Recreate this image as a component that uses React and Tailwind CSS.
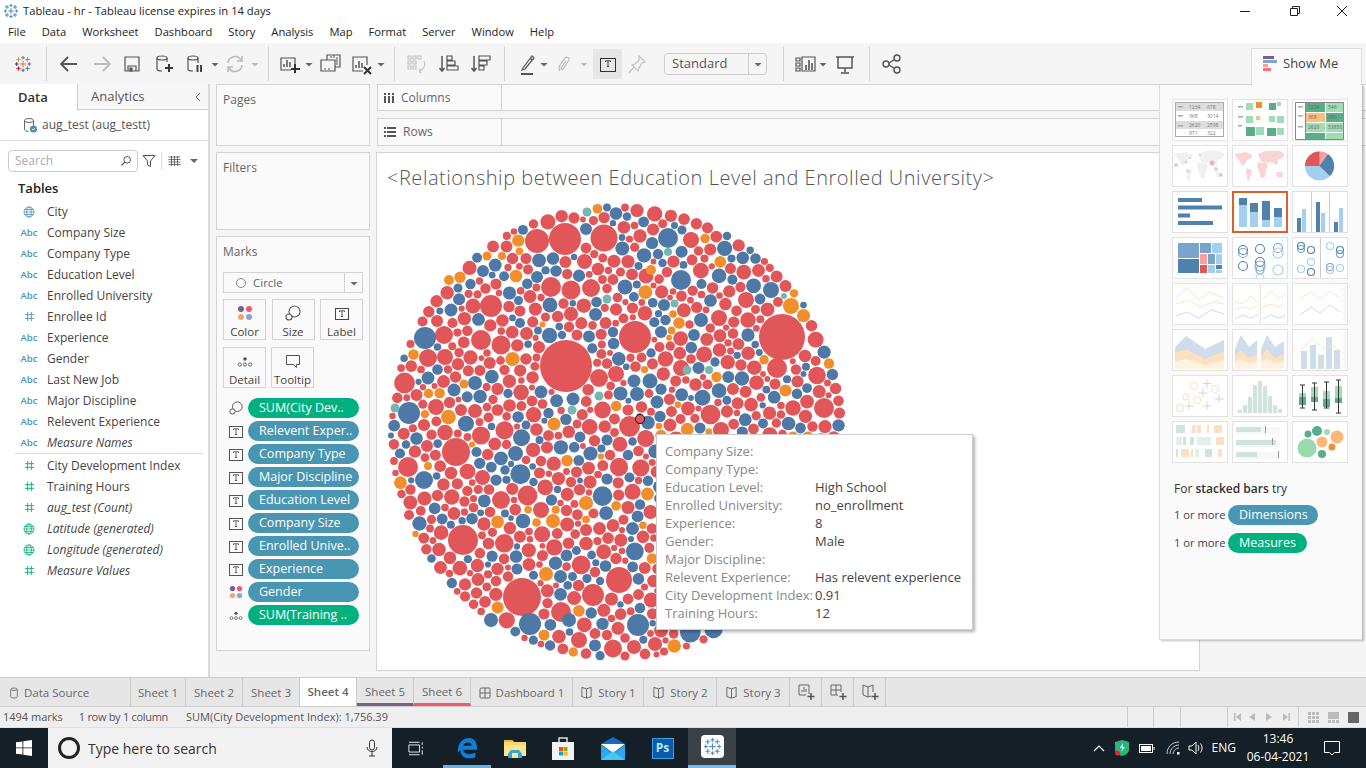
import React from 'react';

const RED = '#e15759';
const BLUE = '#4e79a7';
const ORANGE = '#f28e2b';
const TEAL = '#76b7b2';

// big marks read off the picture, page coordinates
const fixedMarks = [
  [565, 366, 26, RED], [634, 337, 16, RED], [564, 239, 16, RED], [603, 238, 13.5, RED], [536, 241, 12, RED],
  [550, 287, 10, RED], [570, 290, 9.5, RED], [590, 288, 9, RED], [490, 306, 11, RED], [472, 306, 7.5, RED],
  [480, 340, 10, RED], [500, 345, 9.5, RED], [443, 335, 9, RED], [427, 358, 9, RED], [444, 357, 8, RED],
  [435, 407, 8, RED], [460, 410, 6, RED], [474, 411, 7, RED], [598, 378, 9, RED], [615, 374, 8, RED],
  [645, 276, 7.5, RED], [781, 337, 23, RED], [521, 597, 19, RED], [462, 540, 15, RED], [455, 452, 14, RED],
  [618, 580, 13, RED], [592, 595, 11, RED], [407, 467, 10, RED], [776, 368, 10, RED], [823, 408, 10, RED],
  [799, 454, 10, RED], [560, 612, 10, RED], [578, 640, 8, RED], [500, 500, 9, RED], [540, 510, 8, RED],
  [680, 368, 8, RED], [718, 318, 8, RED], [690, 240, 8, RED], [745, 300, 8, RED], [720, 430, 8, RED],
  [424, 338, 11, BLUE], [408, 413, 11, BLUE], [667, 238, 10, BLUE], [474, 383, 7, BLUE], [453, 390, 6.5, BLUE],
  [427, 378, 6.5, BLUE], [450, 310, 6.5, BLUE], [624, 287, 7.5, BLUE], [649, 381, 7.5, BLUE], [633, 381, 6.5, BLUE],
  [636, 394, 7, BLUE], [656, 402, 6.5, BLUE], [572, 399, 6.5, BLUE], [555, 271, 5.8, BLUE], [536, 277, 6, BLUE],
  [482, 271, 6, BLUE], [585, 229, 6, BLUE], [637, 625, 11, BLUE], [529, 624, 11, BLUE], [680, 280, 10, BLUE],
  [423, 480, 9, BLUE], [490, 620, 7, BLUE], [568, 620, 7, BLUE], [770, 290, 8, BLUE], [700, 320, 7, BLUE],
  [515, 276, 6.3, ORANGE], [553, 424, 6.5, ORANGE], [790, 306, 8, ORANGE], [463, 384, 4.5, ORANGE], [448, 280, 5, ORANGE],
  [486, 256, 4.5, ORANGE], [501, 256, 4, ORANGE], [427, 466, 4, ORANGE], [545, 574, 7, ORANGE], [650, 270, 5, ORANGE],
  [586, 212, 4.5, TEAL], [606, 299, 4.5, TEAL], [598, 396, 4.5, TEAL], [571, 410, 4.5, TEAL], [394, 408, 4.5, TEAL],
  [667, 252, 4, TEAL], [686, 370, 4.5, TEAL], [708, 370, 4, TEAL],
];

function packMarks() {
  let seed = 74231;
  const rnd = () => {
    seed = (seed + 0x6d2b79f5) | 0;
    let t = Math.imul(seed ^ (seed >>> 15), 1 | seed);
    t = (t + Math.imul(t ^ (t >>> 7), 61 | t)) ^ t;
    return ((t ^ (t >>> 14)) >>> 0) / 4294967296;
  };
  const cx = 616, cy = 432, R = 229, gap = 0.6, cell = 24;
  const fixed = fixedMarks.map(([x, y, r, c]) => ({ x, y, r, c, fixed: true }));
  const out = [];
  const hash = new Map();
  const key = (a, b) => a * 1000 + b;
  const cellOf = (m) => key(Math.floor(m.x / cell), Math.floor(m.y / cell));
  const add = (m) => {
    const k = cellOf(m);
    if (!hash.has(k)) hash.set(k, []);
    hash.get(k).push(m);
  };
  const remove = (m) => {
    const list = hash.get(cellOf(m));
    list.splice(list.indexOf(m), 1);
  };
  // largest radius that is free at (x,y), self excluded
  const room = (x, y, self) => {
    let best = R - Math.hypot(x - cx, y - cy);
    for (const m of fixed) best = Math.min(best, Math.hypot(x - m.x, y - m.y) - m.r - gap);
    const a = Math.floor(x / cell), b = Math.floor(y / cell);
    for (let i = a - 1; i <= a + 1; i++) for (let j = b - 1; j <= b + 1; j++) {
      const list = hash.get(key(i, j));
      if (!list) continue;
      for (const m of list) {
        if (m !== self) best = Math.min(best, Math.hypot(x - m.x, y - m.y) - m.r - gap);
      }
    }
    return best;
  };
  const points = [];
  for (let x = cx - R; x <= cx + R; x += 1.5) for (let y = cy - R; y <= cy + R; y += 1.5) {
    if ((x - cx) ** 2 + (y - cy) ** 2 < R * R) points.push([x, y]);
  }
  const classes = [[10, 6], [8.5, 16], [7.2, 50], [6.2, 170], [5.3, 330], [4.5, 520], [3.8, 500], [3, 300]];
  for (const [size, count] of classes) {
    for (let i = points.length - 1; i > 0; i--) {
      const j = Math.floor(rnd() * (i + 1));
      [points[i], points[j]] = [points[j], points[i]];
    }
    let placed = 0;
    for (const [x, y] of points) {
      if (placed >= count) break;
      const r = size * (0.94 + rnd() * 0.1);
      if (room(x, y, null) < r) continue;
      const v = rnd();
      const m = { x, y, r, c: v < 0.66 ? RED : v < 0.92 ? BLUE : v < 0.985 ? ORANGE : TEAL };
      out.push(m);
      add(m);
      placed++;
    }
  }
  // nudge and grow each mark into the free space next to it, that closes the gaps
  for (let pass = 0; pass < 4; pass++) {
    for (const m of out) {
      remove(m);
      let bx = m.x, by = m.y, br = room(m.x, m.y, null);
      for (let t = 0; t < 6; t++) {
        const a = rnd() * 6.283, d = 0.5 + rnd() * 2.5;
        const x = m.x + Math.cos(a) * d, y = m.y + Math.sin(a) * d;
        const r = room(x, y, null);
        if (r > br) { bx = x; by = y; br = r; }
      }
      m.x = bx; m.y = by;
      m.r = Math.min(br, Math.max(m.r + 1.2, 6));
      add(m);
    }
  }
  for (const m of out) {
    if (m.c === TEAL && m.r > 5) m.c = RED;
    if (m.c === ORANGE && m.r > 7.5) m.c = RED;
  }
  return fixed.concat(out);
}

const marks = packMarks();

function BubbleChart() {
  return (
    <svg viewBox="376 196 480 474" className="w-[480px] h-[474px] block">
      {marks.map((m, i) => (
        <circle key={i} cx={m.x} cy={m.y} r={m.r} fill={m.c} />
      ))}
      <circle cx="639" cy="419" r="4.6" fill={RED} stroke="#111" strokeWidth="1" />
    </svg>
  );
}

function Ico({ className = 'w-[24px] h-[24px]', size = 24, children, color = '#555', fill = 'none', sw = 1.2 }) {
  return (
    <svg viewBox={`0 0 ${size} ${size}`} className={`${className} shrink-0`} fill={fill} stroke={color} strokeWidth={sw}>
      {children}
    </svg>
  );
}

function Caret({ className, color = '#666' }) {
  return (
    <svg viewBox="0 0 8 24" className={`w-[8px] h-[24px] shrink-0 ${className}`}>
      <path d="M0.5 11h7l-3.5 3.5z" fill={color} />
    </svg>
  );
}

function Sep({ className }) {
  return <div className={`w-px h-[35px] bg-[#d4d4d4] shrink-0 ${className}`} />;
}

function TableauLogo({ className = 'w-[18px] h-[18px]', mono }) {
  const cross = (x, y, s, c) => (
    <path d={`M${x - s} ${y}h${2 * s}M${x} ${y - s}v${2 * s}`} stroke={mono || c} strokeWidth="1.2" />
  );
  return (
    <svg viewBox="0 0 20 20" className={className} fill="none">
      {cross(10, 10, 3.5, mono || '#e8762c')}
      {cross(10, 3, 2, '#5b879b')}
      {cross(10, 17, 2, '#5b6591')}
      {cross(3, 10, 2, '#1f447e')}
      {cross(17, 10, 2, '#5c6692')}
      {cross(5, 5, 2.5, '#eb912b')}
      {cross(15, 5, 2.5, '#7099a6')}
      {cross(5, 15, 2.5, '#c72035')}
      {cross(15, 15, 2.5, '#59879b')}
    </svg>
  );
}

function TextBox({ className = 'w-[24px] h-[24px]', size = 24, x = 5, w = 14, color = '#444' }) {
  return (
    <svg viewBox={`0 0 ${size} ${size}`} className={`${className} shrink-0`} fill="none" stroke={color}>
      <rect x={x + 0.5} y={x + 2.5} width={w - 1} height={w - 3} />
      <path d={`M${x + w / 2 - 2.5} ${x + 6}v-1.2h5v1.2M${x + w / 2} ${x + 4.8}v5.7M${x + w / 2 - 1.2} ${x + 10.5}h2.4`} strokeWidth="0.9" />
    </svg>
  );
}

function Toolbar() {
  return (
    <div className="h-[41px] bg-[#f5f5f5] flex items-center shrink-0">
      <div className="w-[46px] flex justify-center"><TableauLogo /></div>
      <Sep className="ml-0" />
      <Ico className="w-[24px] h-[24px] ml-[10px]" color="#555" sw="1.8"><path d="M20 12H4M11 5l-7 7 7 7" /></Ico>
      <Ico className="w-[24px] h-[24px] ml-[9px]" color="#bbb" sw="1.8"><path d="M4 12h16M13 5l7 7-7 7" /></Ico>
      <Ico className="w-[24px] h-[24px] ml-[6px]"><path d="M5 5h14v14H5zM8 19v-5h8v5" /><path d="M10 16h2v3h-2z" fill="#555" /></Ico>
      <Ico className="w-[24px] h-[24px] ml-[8px]"><ellipse cx="10" cy="6" rx="5" ry="2" /><path d="M5 6v11c0 1 2 2 5 2M15 6v4" /><path d="M17 12v8M13 16h8" stroke="#333" strokeWidth="2" /></Ico>
      <Ico className="w-[24px] h-[24px] ml-[7px]"><ellipse cx="10" cy="6" rx="5" ry="2" /><path d="M5 6v11c0 1 2 2 5 2M15 6v5" /><path d="M14.5 13v7M18 13v7" stroke="#444" strokeWidth="2" /></Ico>
      <Caret className="ml-[4px]" />
      <Ico className="w-[24px] h-[24px] ml-[4px]" color="#bbb" sw="1.6"><path d="M5 11a7 7 0 0 1 13-3M19 13a7 7 0 0 1-13 3" /><path d="M19 4v5h-5M5 20v-5h5" /></Ico>
      <Caret className="ml-[4px]" color="#bbb" />
      <Sep className="ml-[9px]" />
      <Ico className="w-[24px] h-[24px] ml-[8px]"><path d="M14 18H4V6h14v6" /><path d="M7 15v-3M10 15V8M13 15v-5" strokeWidth="1.5" /><path d="M18 12v9M14 17h9" stroke="#333" strokeWidth="2" /></Ico>
      <Caret className="ml-[4px]" />
      <Ico className="w-[24px] h-[24px] ml-[5px]"><path d="M9 8V3h13v12h-5" /><path d="M3 8h14v11H3z" fill="#f5f5f5" /><path d="M13 6V4M16 6V3M19 13V5M6 17h2M10 17h2" strokeWidth="1" /></Ico>
      <Ico className="w-[24px] h-[24px] ml-[7px]"><path d="M14 19H4V5h14v8" /><path d="M7 16v-3M10 16V9M13 16v-5" strokeWidth="1.5" /><path d="M15 15l7 7M22 15l-7 7" stroke="#333" strokeWidth="2" /></Ico>
      <Caret className="ml-[4px]" />
      <Sep className="ml-[9px]" />
      <Ico className="w-[24px] h-[24px] ml-[9px]" color="#c4c4c4"><path d="M4 4h3v3H4zM9 4h3v3H9zM14 4h3v3h-3zM4 9h3v3H4zM9 9h3v3H9zM4 14h3v3H4zM9 14h3v3H9z" /><path d="M20 9a7 7 0 0 1-5 10M15 19l2-2M15 19l2 2" /></Ico>
      <Ico className="w-[24px] h-[24px] ml-[9px]"><path d="M5 4v15M2.5 16l2.5 3 2.5-3" strokeWidth="1.5" /><path d="M10 4h5v4h-5zM10 9h8v4h-8zM10 14h11v4H10z" /></Ico>
      <Ico className="w-[24px] h-[24px] ml-[8px]"><path d="M5 4v15M2.5 16l2.5 3 2.5-3" strokeWidth="1.5" /><path d="M10 4h11v4H10zM10 9h8v4h-8zM10 14h5v4h-5z" /></Ico>
      <Sep className="ml-[11px]" />
      <Ico className="w-[24px] h-[24px] ml-[10px]"><path d="M8 16l-1 2 3-1 9-11-2-2zM15 6l2 2" /><path d="M6 22h12" strokeWidth="2" /></Ico>
      <Caret className="ml-[1px]" />
      <Ico className="w-[24px] h-[24px] ml-[4px]" color="#bbb"><path d="M8 19c-2-2-1-4 0-6l5-7c2-2 5 0 4 2l-6 9c-1 1-2 0-2-1l5-7" /></Ico>
      <Caret className="ml-[4px]" color="#bbb" />
      <div className="w-[29px] h-[30px] ml-[5px] bg-[#e6e6e6] flex items-center justify-center"><TextBox color="#333" x={4} w={16} /></div>
      <Ico className="w-[24px] h-[24px] ml-[3px]" color="#c0c0c0"><path d="M14 4l6 6-3 1-3 5-1 3-6-6 3-1 4-4zM9 15l-5 6" /></Ico>
      <div className="ml-[15px] w-[103px] h-[22px] border border-[#ccc] rounded-sm flex items-center">
        <span className="flex-1 pl-[7px] text-[13px] text-[#555]">Standard</span>
        <div className="w-[18px] h-full border-l border-[#ccc] flex items-center justify-center">
          <Caret />
        </div>
      </div>
      <Sep className="ml-[16px]" />
      <Ico className="w-[24px] h-[24px] ml-[9px]"><path d="M3 6h4v3H3zM3 11h4v3H3zM3 16h4v3H3zM9 5h13v14H9z" /><path d="M13 18v-5M16 18V8M19 18v-7" strokeWidth="1.6" /></Ico>
      <Caret className="ml-[2px]" />
      <Ico className="w-[24px] h-[24px] ml-[6px]"><path d="M3 5h18M5 5v11h14V5M12 16v4M8 21h8" strokeWidth="1.5" /></Ico>
      <Sep className="ml-[12px]" />
      <Ico className="w-[24px] h-[24px] ml-[10px]" sw="1.4"><circle cx="6" cy="12" r="3" /><circle cx="17" cy="6" r="3" /><circle cx="17" cy="18" r="3" /><path d="M9 11l5.5-3.5M9 13l5.5 3.5" /></Ico>
    </div>
  );
}

function FieldIcon({ type, color }) {
  if (type === 'abc') {
    return <span className={`w-[28px] text-center text-[9.5px] font-semibold leading-none ${color}`}>Abc</span>;
  }
  if (type === 'num') {
    return (
      <span className="w-[28px] flex justify-center">
        <svg viewBox="0 0 12 12" className={`w-[11px] h-[11px] ${color}`} stroke="currentColor" fill="none">
          <path d="M4 1v10M8 1v10M1 4h10M1 8h10" />
        </svg>
      </span>
    );
  }
  return (
    <span className="w-[28px] flex justify-center">
      <svg viewBox="0 0 12 12" className={`w-[12px] h-[12px] ${color}`} stroke="currentColor" fill="none" strokeWidth="0.8">
        <circle cx="6" cy="6" r="5" /><ellipse cx="6" cy="6" rx="2.3" ry="5" /><path d="M1 6h10M1.7 3.5h8.6M1.7 8.5h8.6" />
      </svg>
    </span>
  );
}

const dims = [
  ['geo', 'City'], ['abc', 'Company Size'], ['abc', 'Company Type'], ['abc', 'Education Level'], ['abc', 'Enrolled University'],
  ['num', 'Enrollee Id'], ['abc', 'Experience'], ['abc', 'Gender'], ['abc', 'Last New Job'], ['abc', 'Major Discipline'],
  ['abc', 'Relevent Experience'], ['abc', 'Measure Names', true],
];
const measures = [
  ['num', 'City Development Index'], ['num', 'Training Hours'], ['num', 'aug_test (Count)', true],
  ['geo', 'Latitude (generated)', true], ['geo', 'Longitude (generated)', true], ['num', 'Measure Values', true],
];

function FieldRow({ type, name, italic, color }) {
  return (
    <div className="h-[21px] flex items-center pl-[15px]">
      <FieldIcon type={type} color={color} />
      <span className={`ml-[4px] text-[12px] text-[#444] whitespace-nowrap ${italic ? 'italic' : ''}`}>{name}</span>
    </div>
  );
}

function DataPane() {
  return (
    <div className="w-[210px] shrink-0 bg-white border-r-2 border-[#d9d9d9] flex flex-col">
      <div className="h-[26px] flex shrink-0">
        <div className="w-[77px] flex items-center pl-[18px] pt-[1px] text-[13px] font-semibold text-[#333]">Data</div>
        <div className="flex-1 border-l border-b border-[#ccc] bg-[#f7f7f7] flex items-center pl-[13px] pt-[1px] text-[13px] text-[#555]">
          Analytics
          <svg viewBox="0 0 10 10" className="w-[10px] h-[10px] ml-auto mr-[5px]" fill="none" stroke="#666"><path d="M7 1L3 5l4 4" /></svg>
        </div>
      </div>
      <div className="h-[31px] border-b border-[#ddd] flex items-center pl-[22px] shrink-0">
        <svg viewBox="0 0 16 16" className="w-[16px] h-[16px]" fill="none" stroke="#666">
          <ellipse cx="7" cy="3.5" rx="4.5" ry="2" /><path d="M2.5 3.5v9c0 1 2 2 4 2M11.5 3.5v5" />
          <circle cx="11.5" cy="12" r="3.5" fill="#4a8fb0" stroke="none" />
          <path d="M10 12l1 1 2-2" stroke="#fff" />
        </svg>
        <span className="ml-[4px] text-[12px] text-[#555]">aug_test (aug_testt)</span>
      </div>
      <div className="flex items-center mt-[9px] pl-[8px] shrink-0">
        <div className="w-[130px] h-[22px] border border-[#ccc] rounded-sm flex items-center pl-[6px] pr-[5px]">
          <span className="text-[12px] text-[#aaa] flex-1">Search</span>
          <svg viewBox="0 0 12 12" className="w-[12px] h-[12px]" fill="none" stroke="#555"><circle cx="7.2" cy="4.8" r="3.3" /><path d="M4.8 7.2L1.5 10.5" strokeWidth="1.2" /></svg>
        </div>
        <svg viewBox="0 0 14 14" className="w-[14px] h-[14px] ml-[4px]" fill="none" stroke="#555"><path d="M1 1.5h12L8.5 7v5.5L5.5 11V7z" /></svg>
        <div className="w-px h-[18px] bg-[#ddd] ml-[5px]" />
        <svg viewBox="0 0 12 10" className="w-[13px] h-[10px] ml-[6px]" fill="none" stroke="#555" strokeWidth="0.8"><path d="M0 1h12M0 3.5h12M0 6h12M0 8.500h12M3 0v10M6 0v10M9 0v10" /></svg>
        <svg viewBox="0 0 8 6" className="w-[8px] h-[6px] ml-[9px]"><path d="M0 1h8L4 5z" fill="#666" /></svg>
      </div>
      <div className="text-[13px] font-semibold text-[#222] pl-[18px] mt-[6px] h-[20px] leading-[20px] shrink-0">Tables</div>
      <div className="mt-[3px]">
        {dims.map(([t, n, it]) => <FieldRow key={n} type={t} name={n} italic={it} color="text-[#4996b2]" />)}
      </div>
      <div className="h-px bg-[#ddd] ml-[15px] mr-[5px] mb-[1px]" />
      <div>
        {measures.map(([t, n, it]) => <FieldRow key={n} type={t} name={n} italic={it} color="text-[#00b180]" />)}
      </div>
    </div>
  );
}

function MarkBtn({ label, children, className = 'w-[43px]' }) {
  return (
    <div className={`${className} h-[41px] border border-[#d4d4d4] flex flex-col items-center justify-between pt-[3px]`}>
      <div className="h-[20px] flex items-center justify-center">{children}</div>
      <span className="text-[11.5px] leading-[15px] text-[#444]">{label}</span>
    </div>
  );
}

function ColorDots({ className = 'w-[16px] h-[16px]' }) {
  return (
    <svg viewBox="0 0 16 16" className={`${className} shrink-0`}>
      <circle cx="4" cy="4" r="3" fill="#76608a" /><circle cx="12" cy="4" r="3" fill="#f1596e" />
      <circle cx="4" cy="12" r="3" fill="#f2a474" /><circle cx="12" cy="12" r="3" fill="#8aa5cd" />
    </svg>
  );
}

function SizeIcon({ className = 'w-[16px] h-[16px]' }) {
  return (
    <svg viewBox="0 0 16 16" className={`${className} shrink-0`} fill="none" stroke="#555" strokeWidth="1.1">
      <circle cx="9.5" cy="6.5" r="5.5" />
      <circle cx="4" cy="12" r="3" fill="#fafafa" />
    </svg>
  );
}

function DetailIcon({ className = 'w-[16px] h-[16px]' }) {
  return (
    <svg viewBox="0 0 16 16" className={`${className} shrink-0`} fill="none" stroke="#555" strokeWidth="0.9">
      <circle cx="8" cy="6" r="1.8" fill="#555" stroke="none" />
      <circle cx="2.8" cy="11.500" r="1.6" /><circle cx="8" cy="11.500" r="1.6" /><circle cx="13.2" cy="11.500" r="1.6" />
    </svg>
  );
}

const pills = [
  ['size', 'SUM(City Dev..', true], ['text', 'Relevent Exper..'], ['text', 'Company Type'], ['text', 'Major Discipline'],
  ['text', 'Education Level'], ['text', 'Company Size'], ['text', 'Enrolled Unive..'], ['text', 'Experience'],
  ['color', 'Gender'], ['detail', 'SUM(Training ..', true],
];

function MarksCard() {
  return (
    <div className="h-[415px] mt-[6px] bg-[#fafafa] border border-[#d4d4d4] px-[6px]">
      <div className="text-[12px] text-[#666] pt-[6px] h-[35px]">Marks</div>
      <div className="h-[21px] border border-[#d4d4d4] flex items-center">
        <div className="flex-1 flex items-center pl-[12px]">
          <span className="w-[10px] h-[10px] rounded-full border border-[#888]" />
          <span className="ml-[7px] text-[11.5px] text-[#666]">Circle</span>
        </div>
        <div className="w-[18px] h-full border-l border-[#d4d4d4] flex items-center justify-center"><Caret /></div>
      </div>
      <div className="flex gap-[5px] mt-[6px] justify-between">
        <MarkBtn label="Color"><ColorDots /></MarkBtn>
        <MarkBtn label="Size"><SizeIcon /></MarkBtn>
        <MarkBtn label="Label"><TextBox className="w-[16px] h-[16px]" size={16} x={1} w={14} /></MarkBtn>
      </div>
      <div className="flex gap-[5px] mt-[7px]">
        <MarkBtn label="Detail"><DetailIcon /></MarkBtn>
        <MarkBtn label="Tooltip">
          <svg viewBox="0 0 16 16" className="w-[16px] h-[16px]" fill="none" stroke="#555"><path d="M1.500 2.500h13v9h-3v3l-3-3h-7z" /></svg>
        </MarkBtn>
      </div>
      <div className="mt-[10px] flex flex-col gap-[3px]">
        {pills.map(([icon, label, green]) => (
          <div key={label} className="flex items-center h-[20px]">
            <span className="w-[25px] flex justify-center">
              {icon === 'size' && <SizeIcon className="w-[14px] h-[14px]" />}
              {icon === 'text' && <TextBox className="w-[14px] h-[14px]" size={14} x={0} w={14} color="#555" />}
              {icon === 'color' && <ColorDots className="w-[14px] h-[14px]" />}
              {icon === 'detail' && <DetailIcon className="w-[14px] h-[14px]" />}
            </span>
            <div className={`w-[111px] h-[20px] rounded-full flex items-center pl-[11px] text-[12.5px] text-white whitespace-nowrap overflow-hidden ${green ? 'bg-[#00b180]' : 'bg-[#4996b2]'}`}>
              {label}
            </div>
          </div>
        ))}
      </div>
    </div>
  );
}

function Shelf({ label, icon, className }) {
  return (
    <div className={`flex border border-[#d4d4d4] bg-[#fafafa] border-r-0 ${className}`}>
      <div className="w-[124px] border-r border-[#d4d4d4] flex items-center pl-[6px] text-[12px] text-[#666]">
        {icon}
        <span className="ml-[7px]">{label}</span>
      </div>
    </div>
  );
}

function Tooltip() {
  const rows = [
    ['Company Size:', ''], ['Company Type:', ''], ['Education Level:', 'High School'], ['Enrolled University:', 'no_enrollment'],
    ['Experience:', '8'], ['Gender:', 'Male'], ['Major Discipline:', ''], ['Relevent Experience:', 'Has relevent experience'],
    ['City Development Index:', '0.91'], ['Training Hours:', '12'],
  ];
  return (
    <div className="absolute left-[279px] top-[281px] w-[317px] h-[196px] bg-white border border-[#ccc] shadow-[2px_2px_3px_rgba(0,0,0,0.3)] pl-[8px] pt-[8px]">
      {rows.map(([k, v]) => (
        <div key={k} className="flex h-[18px] items-center text-[13px] whitespace-nowrap">
          <span className="w-[150px] text-[#888]">{k}</span>
          <span className="text-[#444]">{v}</span>
        </div>
      ))}
    </div>
  );
}

function Rects({ items }) {
  return items.map(([x, y, w, h, c], i) => <rect key={i} x={x} y={y} width={w} height={h} fill={c} />);
}

function Dots({ items, fill }) {
  return items.map(([x, y, r, c], i) => (
    <circle key={i} cx={x} cy={y} r={r} fill={fill ? c : 'none'} stroke={fill ? 'none' : c} strokeWidth={fill ? 0 : 1.1} />
  ));
}

const G1 = '#a0dcb4', G2 = '#59ad88', LB = '#a5cfef', DB = '#4f81ad', MB = '#79a5cc', OL = '#fde3c4', BL = '#cfdcea';

const WORLD = 'M2 9l12-2 7 3-3 4-3 1-2 4-3 2-2-4-3-4zM15 23l5 2-1 5-3 7-1-5-1-5zM26 9l8-3h14l5 3-3 4-4 2-1 5-4-2-3-1-3 1-5-1-2-3zM26 17l8 1 2 4-2 3-1 7-4 1-2-7-2-5zM44 27h6l1 5h-6z';

const thumbs = [
  <>
    <rect x="3.500" y="3.500" width="48" height="34" fill="#fff" stroke="#aaa" />
    <Rects items={[[4, 4, 47, 8, '#ddd'], [4, 22, 47, 8, '#ddd'], [6, 7, 5, 1.5, '#aaa'], [6, 16, 5, 1.5, '#aaa'], [6, 26, 5, 1.5, '#aaa']]} />
    <g fontSize="5" fill="#777" fontFamily="Open Sans">
      <text x="17" y="10">1234</text><text x="35" y="10">678</text><text x="17" y="19">368</text><text x="35" y="19">3014</text>
      <text x="17" y="28">2620</text><text x="35" y="28">2598</text><text x="17" y="36">971</text><text x="35" y="36">322</text>
    </g>
  </>,
  <Rects items={[[6, 7, 5, 1.5, '#aaa'], [6, 17, 5, 1.5, '#aaa'], [6, 26, 4, 1.5, '#aaa'], [14, 4, 7, 7, G1], [24, 3, 6, 6, '#f28e2b'], [37, 4, 7, 7, G2], [45, 3, 4, 4, G1], [14, 17, 7, 7, G1], [24, 17, 4, 4, '#ffbe7d'], [37, 17, 6, 6, G1], [45, 17, 7, 7, G1], [14, 28, 9, 9, G2], [24, 28, 8, 8, G1], [35, 29, 9, 8, G2], [45, 29, 7, 7, G1]]} />,
  <>
    <Rects items={[[6, 7, 5, 1.5, '#aaa'], [6, 16, 5, 1.5, '#aaa'], [6, 27, 5, 1.5, '#aaa'], [14, 4, 19, 9, G2], [34, 4, 17, 9, G1], [14, 14, 19, 9, '#ffbe7d'], [34, 14, 17, 9, G2], [14, 24, 19, 9, G1], [34, 24, 17, 9, G1], [14, 34, 19, 6, G2], [34, 34, 17, 6, G1]]} />
    <path d="M3.500 3.500H51.500V40.500H3.500zM13.500 3.500V40.500" fill="none" stroke="#888" />
    <g fontSize="5" fill="#666" fontFamily="Open Sans">
      <text x="16" y="10">1234</text><text x="36" y="10">546</text><text x="16" y="20">368</text><text x="36" y="20">380</text>
      <text x="16" y="30">2620</text><text x="36" y="30">53850</text>
    </g>
  </>,
  <>
    <path d={WORLD} fill="#f0f0f0" />
    <Dots fill items={[[4, 20, 2, '#f1c9c9'], [14, 17, 1.5, '#f1c9c9'], [18, 13, 1, '#f1c9c9'], [28, 10, 1, '#f1c9c9'], [40, 18, 2.500, '#ecb5b5'], [44, 24, 2, '#f1c9c9'], [49, 30, 1.5, '#ecb5b5'], [16, 26, 1.500, '#f1c9c9']]} />
  </>,
  <path d={WORLD} fill="#f9d5d2" />,
  <>
    <circle cx="27.500" cy="21" r="14.500" fill={LB} />
    <path d="M27.500 21V6.500A14.500 14.500 0 0 1 36 9z" fill="#ff9d9a" />
    <path d="M27.500 21L36 9A14.500 14.500 0 0 1 38 31z" fill={DB} />
    <path d="M27.500 21V6.500A14.500 14.500 0 0 0 13 21z" fill={RED} />
  </>,
  <Rects items={[[6, 7, 24, 4, DB], [6, 14.500, 44, 4, DB], [6, 22.500, 12, 4, DB], [6, 30, 35, 4, DB]]} />,
  <Rects items={[[7, 7, 8, 7, DB], [7, 14, 8, 22, LB], [18, 12, 8, 9, DB], [18, 21, 8, 15, LB], [30, 10, 8, 19, DB], [30, 29, 8, 7, LB], [42, 17, 8, 9, DB], [42, 26, 8, 10, LB]]} />,
  <Rects items={[[19, 1, 1, 40, '#ccc'], [37, 1, 1, 40, '#ccc'], [5, 27, 4, 14, DB], [10, 18, 4, 24, LB], [24, 11, 4, 31, DB], [29, 22, 4, 20, LB], [42, 31, 4, 11, DB], [47, 17, 4, 25, LB]]} />,
  <Rects items={[[6, 6, 21, 15, MB], [6, 22, 21, 14, DB], [28, 6, 11, 10, MB], [40, 6, 10, 10, LB], [28, 17, 7, 10, '#ff9d9a'], [36, 17, 7, 10, MB], [44, 17, 6, 10, LB], [28, 28, 7, 8, RED], [36, 28, 7, 8, LB], [44, 28, 6, 4, DB], [44, 33, 6, 3, LB]]} />,
  <Dots items={[[11, 13, 4.500, DB], [11, 16, 4.500, MB], [28, 12, 4.500, DB], [46, 11, 4.500, MB], [46, 16, 5, LB], [11, 29, 4.500, DB], [28, 25, 4.500, DB], [28, 29, 5, MB], [28, 33, 4, MB], [46, 33, 5, LB], [28, 41, 4, LB]]} />,
  <>
    <rect x="28" y="1" width="1" height="40" fill="#ccc" />
    <Dots items={[[9, 9, 3.500, DB], [9, 12, 3.500, MB], [19, 13, 3.500, DB], [19, 25, 3.500, LB], [9, 32, 3.500, LB], [19, 35, 3.500, DB], [38, 9, 3.500, LB], [48, 13, 3.500, DB], [48, 17, 3.500, MB], [38, 30, 3.500, MB], [38, 33, 3.500, LB], [48, 31, 3.500, LB]]} />
  </>,
  <>
    <path d="M4 14L15 5l12 12 10-8 15 6" stroke={OL} fill="none" />
    <path d="M4 21l12-4 12 7 14-5 10 2" stroke={OL} fill="none" />
    <path d="M4 33l11-4 12 6 12-8 13 4" stroke={BL} fill="none" />
  </>,
  <>
    <rect x="28" y="1" width="1" height="40" fill="#e3e3e3" />
    <path d="M3 19l8 2 8-8 7 6M31 16l8-8 8 8 6-4" stroke={OL} fill="none" />
    <path d="M3 26l8-2 8 2 7-4M31 24l8-3 8 3 6-2" stroke={OL} fill="none" />
    <path d="M3 36l8-4 8 3 7-3M31 36l8-4 8 3 6-3" stroke={BL} fill="none" />
  </>,
  <>
    <path d="M53 3v36M50 6h3M50 12h3M50 18h3M50 24h3M50 30h3M50 36h3" stroke="#eee" />
    <path d="M8 16l11-7 9 7 10-8 10 7" stroke={OL} fill="none" />
    <path d="M8 32l11-8 9 6 10-8 10 7" stroke={BL} fill="none" />
  </>,
  <>
    <path d="M3 18L14 7l19 13 19-9v29H3z" fill={BL} />
    <path d="M3 24l11-4 19 10 19-8v18H3z" fill="#fde0bf" />
    <path d="M3 33l11-3 19 6 19-5v9H3z" fill="#fff2e0" />
  </>,
  <>
    <path d="M3 20L9 6l8 12 8-7v29H3zM29 20l6-14 8 12 9-6v28H29z" fill={BL} />
    <path d="M3 27l6-6 8 8 8-4v15H3zM29 27l6-6 8 8 9-4v15H29z" fill="#fde0bf" />
    <path d="M3 33l6-3 8 4 8-2v8H3zM29 33l6-3 8 4 9-2v8H29z" fill="#fff2e0" />
  </>,
  <>
    <path d="M53 3v36M50 6h3M50 12h3M50 18h3M50 24h3M50 30h3M50 36h3" stroke="#eee" />
    <Rects items={[[9, 22, 6, 18, BL], [18, 16, 6, 24, BL], [26, 26, 6, 14, BL], [34, 8, 6, 32, BL], [42, 21, 6, 19, BL]]} />
    <path d="M9 22L20 9l12 11 8-4 11 8" stroke={OL} fill="none" />
  </>,
  <>
    <Dots items={[[8, 33, 3.500, OL], [14, 22, 3, OL], [22, 11, 3.500, OL], [25, 25, 3.500, OL], [43, 14, 3.500, OL]]} />
    <path d="M35 4v9M31 8.500h8M31 13v9M26.500 18h9M47 19v9M42.500 24h9M17 26v9M12.500 31h9M35 26v9M30.500 31h9" stroke="#c5dfd0" fill="none" />
  </>,
  <Rects items={[[6, 35, 4, 3, '#cfe5da'], [11, 30, 4, 8, '#cfe5da'], [16, 22, 4, 16, '#cfe5da'], [21, 10, 4, 28, '#cfe5da'], [26, 6, 4, 32, '#cfe5da'], [31, 11, 4, 27, '#cfe5da'], [36, 21, 4, 17, '#cfe5da'], [41, 30, 4, 8, '#cfe5da'], [46, 34, 4, 4, '#cfe5da']]} />,
  <>
    <Rects items={[[7, 18, 7, 12, G1], [7, 22, 7, 8, G2], [19, 12, 7, 15, G1], [19, 22, 7, 5, G2], [31, 16, 7, 16, G1], [31, 24, 7, 8, G2], [43, 11, 7, 17, G1], [43, 23, 7, 5, G2]]} />
    <path d="M10.500 10v23M8 10h5M8 33h5M22.500 8v27M20 8h5M20 35h5M34.500 7v26M32 7h5M32 33h5M46.500 5v33M44 5h5M44 38h5" stroke="#333" fill="none" />
  </>,
  <Rects items={[[4, 4, 9, 8, '#cfe5da'], [20, 4, 4, 8, '#fde0bf'], [25, 4, 4, 8, '#fde0bf'], [35, 4, 2, 8, '#fde0bf'], [42, 4, 8, 8, '#fde0bf'], [4, 16, 6, 8, '#e3f0e9'], [11, 16, 3, 8, '#cfe5da'], [18, 16, 4, 8, '#cfe5da'], [25, 16, 14, 8, '#e3f0e9'], [44, 16, 8, 8, '#fde0bf'], [4, 28, 2, 8, '#cfe5da'], [9, 28, 8, 8, '#fde0bf'], [19, 28, 2, 8, '#fde0bf'], [23, 28, 4, 8, '#e3f0e9'], [33, 28, 7, 8, '#cfe5da'], [46, 28, 4, 8, '#fde0bf']]} />,
  <>
    <Rects items={[[4, 6, 44, 7, '#f7f7f7'], [4, 6, 25, 5, '#cfe5da'], [4, 19, 44, 7, '#f7f7f7'], [4, 19, 40, 5, '#cfe5da'], [4, 31, 44, 7, '#f7f7f7'], [4, 31, 21, 5, '#cfe5da'], [33, 5, 1, 7, '#999'], [40, 17, 1, 7, '#999'], [46, 30, 1, 7, '#999']]} />
  </>,
  <Dots fill items={[[15, 27, 9.500, '#98d9ae'], [16, 13, 3.500, G2], [25, 10, 5, G2], [35, 11, 3, G1], [30, 21, 5.500, '#fdb877'], [45, 16, 6.500, '#fdb877'], [40, 26, 3.500, '#f28e2b'], [30, 33, 4, G2]]} />,
];

function ShowMe() {
  return (
    <>
      <div className="absolute right-[4px] top-[48px] w-[111px] h-[38px] bg-[#fafafa] border-t border-l border-r border-[#ddd] flex items-center pl-[11px] pb-[7px] z-20">
        <svg viewBox="0 0 15 16" className="w-[15px] h-[16px]">
          <rect x="0" y="0" width="11" height="3" fill="#76608a" />
          <rect x="0" y="4" width="14" height="3" fill="#7ca3d1" />
          <rect x="0" y="8" width="5" height="3" fill="#f8a877" />
          <rect x="0" y="12" width="8" height="3" fill="#fb6d7f" />
        </svg>
        <span className="ml-[5px] text-[13px] text-[#444]">Show Me</span>
      </div>
      <div className="absolute right-[4px] top-[85px] w-[203px] h-[555px] bg-[#fafafa] border-l border-b border-[#ddd] shadow-[2px_1px_2px_rgba(0,0,0,0.25)] z-10 pt-[14px] pl-[12px]">
        <div className="grid grid-cols-[repeat(3,56px)] gap-x-[4px] gap-y-[4px]">
          {thumbs.map((t, i) => (
            <div key={i} className={`w-[56px] h-[42px] bg-white outline -outline-offset-1 ${i === 7 ? 'outline-2 -outline-offset-2 outline-[#d9622b]' : 'outline-1 outline-[#e2e2e2]'}`}>
              <svg viewBox="0 0 56 42" className="w-[56px] h-[42px] block">{t}</svg>
            </div>
          ))}
        </div>
        <div className="mt-[16px] pl-[2px] text-[12px] text-[#333] h-[20px] flex items-center">
          <span>For&nbsp;</span><span className="font-semibold">stacked bars</span><span>&nbsp;try</span>
        </div>
        <div className="pl-[2px] mt-[6px] flex items-center text-[11.2px] text-[#444] h-[20px]">
          <span className="w-[52px] whitespace-nowrap">1 or more</span>
          <span className="ml-[2px] w-[90px] h-[20px] rounded-full bg-[#4996b2] text-white flex items-center pl-[11px] text-[12.5px]">Dimensions</span>
        </div>
        <div className="pl-[2px] mt-[8px] flex items-center text-[11.2px] text-[#444] h-[20px]">
          <span className="w-[52px] whitespace-nowrap">1 or more</span>
          <span className="ml-[2px] w-[79px] h-[20px] rounded-full bg-[#00b180] text-white flex items-center pl-[11px] text-[12.5px]">Measures</span>
        </div>
      </div>
    </>
  );
}

function PlusBadge() {
  return <path d="M14 10v7M10.500 13.500h7" stroke="#555" strokeWidth="1.5" />;
}

function Tab({ className, children, icon }) {
  return (
    <div className={`h-full border-r border-[#ccc] flex items-center justify-center text-[11.5px] text-[#666] shrink-0 ${className}`}>
      {icon}
      <span>{children}</span>
    </div>
  );
}

const storyIcon = (
  <svg viewBox="0 0 14 14" className="w-[13px] h-[13px] mr-[5px]" fill="none" stroke="#666"><path d="M7 3L2 1.500v10L7 13l5-1.500v-10zM7 3v10" /></svg>
);

function TabBar() {
  return (
    <div className="h-[30px] shrink-0 bg-[#e6e6e6] border-t border-b border-[#ccc] flex">
      <Tab className="w-[131px] justify-start pl-[9px] pt-[1px]" icon={
        <svg viewBox="0 0 12 14" className="w-[10px] h-[12px] mr-[5px]" fill="none" stroke="#666"><ellipse cx="6" cy="2.500" rx="4" ry="1.500" /><path d="M2 2.500v9c0 2 8 2 8 0v-9" /></svg>
      }>Data Source</Tab>
      <Tab className="w-[55px] pt-[1px]">Sheet 1</Tab>
      <Tab className="w-[57px] pt-[1px]">Sheet 2</Tab>
      <Tab className="w-[57px] pt-[1px]">Sheet 3</Tab>
      <Tab className="w-[57px] bg-white font-semibold text-[#555]">Sheet 4</Tab>
      <Tab className="w-[57px] border-b-[3px] border-b-[#76608a] pt-[3px]">Sheet 5</Tab>
      <Tab className="w-[57px] border-b-[3px] border-b-[#f1596e] pt-[3px]">Sheet 6</Tab>
      <Tab className="w-[102px] pt-[1px]" icon={
        <svg viewBox="0 0 12 12" className="w-[12px] h-[12px] mr-[5px]" fill="none" stroke="#666"><rect x="1" y="1" width="10" height="10" rx="1" /><path d="M6 1v10M1 6h10" /></svg>
      }>Dashboard 1</Tab>
      <Tab className="w-[71px] pt-[1px]" icon={storyIcon}>Story 1</Tab>
      <Tab className="w-[73px] pt-[1px]" icon={storyIcon}>Story 2</Tab>
      <Tab className="w-[73px] pt-[1px]" icon={storyIcon}>Story 3</Tab>
      <Tab className="w-[32px]" icon={
        <svg viewBox="0 0 18 18" className="w-[18px] h-[18px]" fill="none" stroke="#666"><path d="M12 11V2H2v10h7" /><path d="M5 9V7M7 9V4M9 9V6" /><PlusBadge /></svg>
      } />
      <Tab className="w-[32px]" icon={
        <svg viewBox="0 0 18 18" className="w-[18px] h-[18px]" fill="none" stroke="#666"><path d="M12 9V2H2v10h7M7 2v10M2 7h10" /><PlusBadge /></svg>
      } />
      <Tab className="w-[32px]" icon={
        <svg viewBox="0 0 18 18" className="w-[18px] h-[18px]" fill="none" stroke="#666"><path d="M7 4L2 2v10l5 2 3-1M7 4l5-2v7M7 4v10" /><PlusBadge /></svg>
      } />
    </div>
  );
}

function StatusBar() {
  const nav = '#bbb';
  return (
    <div className="h-[21px] shrink-0 bg-[#efefef] flex items-center text-[11px] text-[#555] border-b border-[#e0e0e0]">
      <span className="ml-[3px] pt-[1px]">1494 marks</span>
      <span className="ml-[16px] pt-[1px] tracking-[-0.3px]">1 row by 1 column</span>
      <span className="ml-[18px] pt-[1px]">SUM(City Development Index): 1,756.39</span>
      <div className="ml-auto flex h-full">
        <div className="w-[26px] border-l border-[#ccc]" />
        <div className="w-[27px] border-l border-[#ccc]" />
        <div className="w-[47px] border-l border-[#ccc]" />
        <div className="w-[71px] border-l border-[#ccc] flex items-center justify-center">
          <svg viewBox="0 0 60 10" className="w-[60px] h-[10px]" fill={nav}>
            <path d="M1 1h1.500v8H1zM8 1v8L3 5zM22 1v8l-6-4zM33 1v8l6-4zM50 1v8l5-4zM55.500 1H57v8h-1.500z" />
          </svg>
        </div>
        <div className="w-[68px] border-l border-[#ccc] flex items-center justify-around pl-[4px] pr-[2px]">
          <svg viewBox="0 0 11 11" className="w-[11px] h-[11px]" fill="#bbb"><path d="M0 0h3v3H0zM4 0h3v3H4zM8 0h3v3H8zM0 4h3v3H0zM4 4h3v3H4zM8 4h3v3H8zM0 8h3v3H0zM4 8h3v3H4zM8 8h3v3H8z" /></svg>
          <svg viewBox="0 0 11 11" className="w-[11px] h-[11px]" fill="#bbb"><path d="M0 0h11v7H0zM0 8h3v3H0zM4 8h3v3H4zM8 8h3v3H8z" /></svg>
          <span className="w-[11px] h-[11px] bg-[#666]" />
        </div>
      </div>
    </div>
  );
}

function TaskBar() {
  return (
    <div className="h-[40px] shrink-0 bg-[#141f28] flex items-center text-white">
      <div className="w-[48px] flex justify-center">
        <svg viewBox="0 0 16 16" className="w-[16px] h-[16px]" fill="#fff"><path d="M0 2.300L6.500 1.400v6.100H0zM7.300 1.300L16 0v7.500H7.300zM0 8.300h6.500v6.200L0 13.700zM7.300 8.300H16V16l-8.700-1.200z" /></svg>
      </div>
      <div className="w-[344px] h-full bg-[#f2f2f2] flex items-center pl-[10px]">
        <span className="w-[22px] h-[22px] rounded-full border-[3px] border-[#222] shrink-0" />
        <span className="ml-[8px] text-[14px] text-[#333]">Type here to search</span>
        <svg viewBox="0 0 12 18" className="w-[12px] h-[18px] ml-auto mr-[14px]" fill="none" stroke="#333"><rect x="3.500" y="1" width="5" height="10" rx="2.500" /><path d="M1 8c0 6 10 6 10 0M6 13v4M3 17h6" /></svg>
      </div>
      <div className="w-[48px] flex justify-center">
        <svg viewBox="0 0 18 16" className="w-[16px] h-[15px]" fill="none" stroke="#fff"><path d="M1 1h12M1 4h12v8H1zM1 15h12M16 1v3M16 6v2M16 10v5" /></svg>
      </div>
      <div className="w-[48px] h-full flex justify-center items-center ml-[3px] border-b-[3px] border-[#6cb0e0] pt-[3px]">
        <svg viewBox="0 0 24 24" className="w-[22px] h-[22px]"><path d="M2 13C3 5 9 1 14 1c6 0 9 5 9 11v2H8c0 5 8 6 13 3v5c-7 3-17 1-16-8-1 1-2 2-3 3zM8 9.500h9C17 5 9 5 8 9.500z" fill="#0f7fd6" /></svg>
      </div>
      <div className="w-[48px] flex justify-center">
        <svg viewBox="0 0 22 20" className="w-[22px] h-[20px]"><path d="M0 2h8l2 2h12v14H0z" fill="#f9d66d" /><path d="M0 2h8l2 2H0z" fill="#e7ba44" /><rect x="0" y="7" width="22" height="11" fill="#fde58f" /><path d="M7 12h8l3 4v4H4v-4z" fill="#2ea6de" /><rect x="8" y="15" width="6" height="5" fill="#fde58f" /></svg>
      </div>
      <div className="w-[48px] flex justify-center">
        <svg viewBox="0 0 22 24" className="w-[22px] h-[24px]"><path d="M7 6V2h8v4" fill="none" stroke="#ddd" strokeWidth="1.500" /><rect x="0" y="6" width="22" height="18" fill="#f2f2f2" /><rect x="7" y="11" width="4" height="4" fill="#f25022" /><rect x="11.500" y="11" width="4" height="4" fill="#7fba00" /><rect x="7" y="15.500" width="4" height="4" fill="#00a4ef" /><rect x="11.500" y="15.500" width="4" height="4" fill="#ffb900" /></svg>
      </div>
      <div className="w-[50px] ml-[1px] flex justify-center">
        <svg viewBox="0 0 24 24" className="w-[24px] h-[24px]"><path d="M12 1L0 8v16h24V8z" fill="#0f6ebf" /><path d="M0 8h24L12 17z" fill="#fff" /><path d="M0 9l12 9L24 9v15H0z" fill="#2aa9ec" /><path d="M0 24L12 15l12 9z" fill="#49c4f4" /></svg>
      </div>
      <div className="w-[49px] flex justify-center">
        <div className="w-[22px] h-[21px] bg-[#0b5ca8] border border-[#30a0e8] flex items-center justify-center text-[12px] font-bold leading-none text-[#bfe3ff]">Ps</div>
      </div>
      <div className="w-[48px] ml-[1px] h-full bg-[#3a4248] border-b-[3px] border-[#76b9ed] flex justify-center items-center">
        <div className="w-[23px] h-[23px] bg-white rounded-sm flex items-center justify-center">
          <TableauLogo className="w-[19px] h-[19px]" mono="#4a90c8" />
        </div>
      </div>
      <div className="ml-auto flex items-center h-full pr-[26px]">
        <svg viewBox="0 0 12 8" className="w-[12px] h-[8px]" fill="none" stroke="#fff" strokeWidth="1.200"><path d="M1 7l5-5 5 5" /></svg>
        <svg viewBox="0 0 16 18" className="w-[16px] h-[18px] ml-[9px]"><path d="M8 1l7 2v7c0 4-3 6-7 7-4-1-7-3-7-7V3z" fill="#29b57c" /><path d="M9 4l-3 5h2.500L7 13l4-5H8.500z" fill="#fff" /><circle cx="3.500" cy="14" r="2.500" fill="#e8262d" /></svg>
        <svg viewBox="0 0 16 9" className="w-[16px] h-[9px] ml-[9px]" fill="none" stroke="#fff"><rect x="0.500" y="0.500" width="13" height="8" /><rect x="2" y="2" width="10" height="5" fill="#fff" stroke="none" /><path d="M15 3v3" /></svg>
        <svg viewBox="0 0 14 14" className="w-[14px] h-[14px] ml-[11px]" fill="none" stroke="#ccc"><path d="M1 13C1 6 6 1 13 1M4 13c0-5 4-9 9-9M7 13c0-3 3-6 6-6" /><rect x="11" y="11" width="2.500" height="2.500" fill="#fff" stroke="none" /></svg>
        <svg viewBox="0 0 16 14" className="w-[16px] h-[14px] ml-[8px]" fill="none" stroke="#fff"><path d="M1 5h3l4-4v12L4 9H1zM10 4c1 2 1 4 0 6M12.500 2.500c2 3 2 6 0 9" /></svg>
        <span className="ml-[8px] text-[12px]">ENG</span>
        <div className="ml-[10px] w-[64px] flex flex-col items-center text-[12px] leading-[18px]">
          <span>13:46</span><span>06-04-2021</span>
        </div>
        <svg viewBox="0 0 16 16" className="w-[16px] h-[16px] ml-[14px]" fill="none" stroke="#fff"><path d="M0.500 1.500h15v11h-5l-2.500 2.500-2.500-2.500h-5z" /></svg>
      </div>
    </div>
  );
}

export default function App() {
  return (
    <div className="relative w-[1366px] h-[768px] overflow-hidden flex flex-col bg-white font-['Open_Sans',sans-serif]">
      <div className="h-[22px] shrink-0 flex items-center pl-[3px] text-[11.2px] text-[#222]">
        <TableauLogo className="w-[16px] h-[16px]" mono="#3d8ab8" />
        <span className="ml-[4px]">Tableau - hr - Tableau license expires in 14 days</span>
        <div className="ml-auto flex h-full">
          <div className="w-[46px] flex items-center justify-center">
            <span className="w-[10px] h-px bg-[#222]" />
          </div>
          <div className="w-[46px] ml-[4px] flex items-center justify-center">
            <svg viewBox="0 0 10 10" className="w-[10px] h-[10px]" fill="none" stroke="#222"><path d="M0.500 2.500h7v7h-7zM2.500 2.500v-2h7v7h-2" /></svg>
          </div>
          <div className="w-[48px] flex items-center justify-center">
            <svg viewBox="0 0 10 10" className="w-[10px] h-[10px]" fill="none" stroke="#222"><path d="M0 0l10 10M10 0L0 10" /></svg>
          </div>
        </div>
      </div>
      <div className="h-[21px] shrink-0 flex items-center pl-[8px] gap-[16px] text-[11.2px] text-[#222]">
        {['File', 'Data', 'Worksheet', 'Dashboard', 'Story', 'Analysis', 'Map', 'Format', 'Server', 'Window', 'Help'].map((m) => (
          <span key={m}>{m}</span>
        ))}
      </div>
      <Toolbar />
      <div className="flex-1 min-h-0 flex bg-[#f5f5f5] pb-0">
        <DataPane />
        <div className="w-[166px] shrink-0 pl-[6px] pr-[6px]">
          <div className="h-[62px] bg-[#fafafa] border border-[#d4d4d4] px-[6px] pt-[6px] text-[12px] text-[#666]">Pages</div>
          <div className="h-[78px] mt-[6px] bg-[#fafafa] border border-[#d4d4d4] px-[6px] pt-[6px] text-[12px] text-[#666]">Filters</div>
          <MarksCard />
        </div>
        <div className="flex-1 min-w-0 flex flex-col">
          <Shelf label="Columns" className="h-[27px] ml-[1px]" icon={
            <svg viewBox="0 0 10 10" className="w-[10px] h-[10px]" fill="#555"><path d="M0 0h2v10H0zM4 0h2v10H4zM8 0h2v10H8z" /><path d="M0 2h10v1H0z" fill="#fafafa" /></svg>
          } />
          <Shelf label="Rows" className="h-[28px] mt-[7px] ml-[1px]" icon={
            <svg viewBox="0 0 12 10" className="w-[12px] h-[10px]" fill="#555"><path d="M0 0h2v2H0zM3 0h9v2H3zM0 4h2v2H0zM3 4h9v2H3zM0 8h2v2H0zM3 8h9v2H3z" /></svg>
          } />
          <div className="relative mt-[6px] w-[824px] h-[519px] bg-white border border-[#d4d4d4]">
            <div className="h-[43px] pt-[9px] pl-[10px] text-[20px] font-light tracking-[0.53px] leading-[32px] text-[#555] whitespace-nowrap">&lt;Relationship between Education Level and Enrolled University&gt;</div>
            <BubbleChart />
            <Tooltip />
          </div>
        </div>
      </div>
      <TabBar />
      <StatusBar />
      <TaskBar />
      <ShowMe />
    </div>
  );
}
